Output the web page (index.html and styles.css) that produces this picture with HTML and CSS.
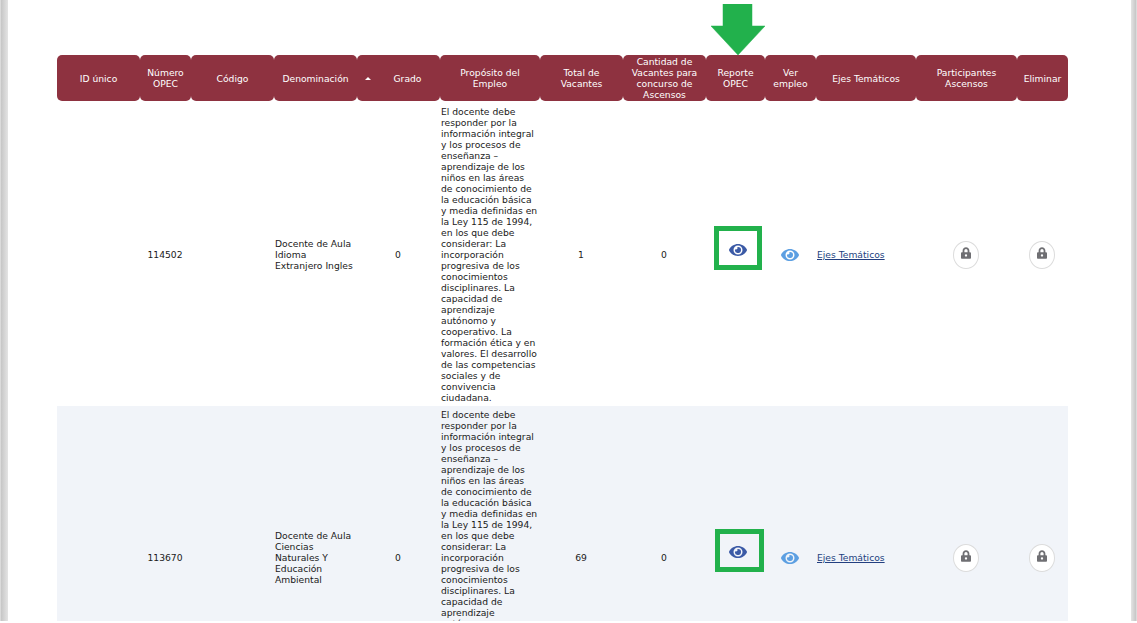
FILE: index.html
```html
<!DOCTYPE html>
<html lang="es">
<head>
<meta charset="utf-8">
<title>Empleos</title>
<link rel="stylesheet" href="styles.css">
</head>
<body>
<svg class="defs" width="0" height="0" aria-hidden="true">
  <symbol id="eye" viewBox="0 0 576 512"><path d="M572.52 241.4C518.29 135.59 410.93 64 288 64S57.68 135.64 3.48 241.41a32.35 32.35 0 0 0 0 29.19C57.71 376.41 165.07 448 288 448s230.32-71.64 284.52-177.41a32.35 32.35 0 0 0 0-29.19zM288 400a144 144 0 1 1 144-144 143.93 143.93 0 0 1-144 144zm0-240a95.31 95.31 0 0 0-25.31 3.79 47.85 47.85 0 0 1-66.9 66.9A95.78 95.78 0 1 0 288 160z"/></symbol>
  <symbol id="lock" viewBox="0 0 448 512"><path d="M400 224h-24v-72C376 68.2 307.8 0 224 0S72 68.2 72 152v72H48c-26.5 0-48 21.5-48 48v192c0 26.5 21.5 48 48 48h352c26.5 0 48-21.5 48-48V272c0-26.5-21.5-48-48-48zm-104 0H152v-72c0-39.7 32.3-72 72-72s72 32.3 72 72v72z"/><circle cx="224" cy="368" r="52" fill="#fff"/></symbol>
</svg>
<div class="shot">
  <div class="edge edge-left"></div>
  <main class="content">
    <svg class="arrow" viewBox="0 0 54 51" aria-hidden="true"><polygon points="12,0 41,0 41,22 54,22 27,51 0,22 12,22" fill="#22b14c" stroke="#22b14c" stroke-width="0.5" stroke-linejoin="round"/></svg>
    <table class="grid">
      <colgroup>
        <col class="w83"><col class="w51"><col class="w83"><col class="w83"><col class="w83"><col class="w100"><col class="w83"><col class="w83"><col class="w59"><col class="w51"><col class="w100"><col class="w101"><col class="w51">
      </colgroup>
      <thead>
        <tr>
          <th>ID único</th>
          <th>Número OPEC</th>
          <th>Código</th>
          <th>Denominación</th>
          <th class="sorted"><span class="sort-up"></span>Grado</th>
          <th>Propósito del Empleo</th>
          <th>Total de Vacantes</th>
          <th>Cantidad de Vacantes para concurso de Ascensos</th>
          <th>Reporte OPEC</th>
          <th>Ver empleo</th>
          <th>Ejes Temáticos</th>
          <th>Participantes Ascensos</th>
          <th>Eliminar</th>
        </tr>
      </thead>
      <tbody>
        <tr class="first">
          <td></td>
          <td>114502</td>
          <td></td>
          <td class="left">Docente de Aula Idioma Extranjero Ingles</td>
          <td>0</td>
          <td class="left purpose">El docente debe<br>responder por la<br>información integral<br>y los procesos de<br>enseñanza –<br>aprendizaje de los<br>niños en las áreas<br>de conocimiento de<br>la educación básica<br>y media definidas en<br>la Ley 115 de 1994,<br>en los que debe<br>considerar: La<br>incorporación<br>progresiva de los<br>conocimientos<br>disciplinares. La<br>capacidad de<br>aprendizaje<br>autónomo y<br>cooperativo. La<br>formación ética y en<br>valores. El desarrollo<br>de las competencias<br>sociales y de<br>convivencia<br>ciudadana.</td>
          <td>1</td>
          <td>0</td>
          <td class="marked"><span class="mark mark-a"></span><svg class="eye eye-report"><use href="#eye"/></svg></td>
          <td><svg class="eye eye-view"><use href="#eye"/></svg></td>
          <td class="left"><a class="link" href="#">Ejes Temáticos</a></td>
          <td><span class="lock-btn"><svg class="lock"><use href="#lock"/></svg></span></td>
          <td><span class="lock-btn"><svg class="lock"><use href="#lock"/></svg></span></td>
        </tr>
        <tr class="alt">
          <td></td>
          <td>113670</td>
          <td></td>
          <td class="left">Docente de Aula Ciencias Naturales Y Educación Ambiental</td>
          <td>0</td>
          <td class="left purpose">El docente debe<br>responder por la<br>información integral<br>y los procesos de<br>enseñanza –<br>aprendizaje de los<br>niños en las áreas<br>de conocimiento de<br>la educación básica<br>y media definidas en<br>la Ley 115 de 1994,<br>en los que debe<br>considerar: La<br>incorporación<br>progresiva de los<br>conocimientos<br>disciplinares. La<br>capacidad de<br>aprendizaje<br>autónomo y<br>cooperativo. La<br>formación ética y en<br>valores. El desarrollo<br>de las competencias<br>sociales y de<br>convivencia<br>ciudadana.</td>
          <td>69</td>
          <td>0</td>
          <td class="marked"><span class="mark mark-b"></span><svg class="eye eye-report"><use href="#eye"/></svg></td>
          <td><svg class="eye eye-view"><use href="#eye"/></svg></td>
          <td class="left"><a class="link" href="#">Ejes Temáticos</a></td>
          <td><span class="lock-btn"><svg class="lock"><use href="#lock"/></svg></span></td>
          <td><span class="lock-btn"><svg class="lock"><use href="#lock"/></svg></span></td>
        </tr>
      </tbody>
    </table>
  </main>
  <div class="edge edge-right"></div>
</div>
</body>
</html>
```
FILE: styles.css
```css
* { box-sizing: border-box; }
html, body { margin: 0; padding: 0; background: #fff; }
body { height: 623px; overflow: hidden; font-family: "DejaVu Sans", Verdana, sans-serif; }
.defs { position: absolute; }
.shot { display: flex; height: 621px; overflow: hidden; }
.edge { flex: none; height: 100%; }
.edge-left { width: 8px; background: linear-gradient(to right, #f0f0f0 0, #c6c6c6 1px, #e4e4e4 8px); }
.edge-right { width: 6px; background: linear-gradient(to right, #e4e4e4 0, #c6c6c6 5px, #f0f0f0 6px); }
.content { position: relative; flex: 1; min-width: 0; padding: 55px 0 0 49px; }
.arrow { position: absolute; left: 703px; top: 4px; width: 54px; height: 51px; z-index: 2; }
.grid { border-collapse: separate; border-spacing: 0; table-layout: fixed; width: 1011px; font-size: 9.2px; line-height: 11px; color: #1a1a1a; }
.w51 { width: 51px; } .w59 { width: 59px; } .w83 { width: 83px; } .w100 { width: 100px; } .w101 { width: 101px; }
.grid th { height: 46px; padding: 0 4px; background: #8e3240; color: #fff; font-weight: 400; text-align: center; vertical-align: middle; border-radius: 5px; }
.grid th.sorted { position: relative; padding-left: 22px; }
.sort-up { position: absolute; left: 8px; top: 22px; width: 0; height: 0; border-left: 3px solid transparent; border-right: 3px solid transparent; border-bottom: 3px solid #fff; }
.grid td { padding: 4px 2px 4px 1px; text-align: center; vertical-align: middle; }
.grid td.left { padding-right: 1px; text-align: left; }
.grid td.purpose { white-space: nowrap; }
.grid .first td { padding-top: 5px; padding-bottom: 3px; }
.grid .alt td { padding-top: 3px; padding-bottom: 5px; background: #f1f4f9; }
.marked { position: relative; }
.mark { position: absolute; border: 5px solid #22b14c; }
.mark-a { left: 8px; top: calc(50% - 28px); width: 48px; height: 44px; }
.mark-b { left: 9px; top: calc(50% - 30px); width: 49px; height: 43px; }
.eye { display: block; width: 18px; height: 16px; }
.eye-report { fill: #3b5aa6; margin: 0 0 10px 22px; }
.alt .eye-report { margin-bottom: 12px; }
.eye-view { fill: #5c9fe2; margin: 0 0 0 15px; }
.link { color: #233f80; text-decoration: underline; }
.lock-btn { display: flex; align-items: flex-start; justify-content: center; width: 26px; height: 28px; margin: 0 auto; padding-top: 5px; border: 1px solid #dcdcdc; border-radius: 50%; background: #fff; }
.lock { display: block; width: 10px; height: 12px; fill: #6f6f73; }
```
